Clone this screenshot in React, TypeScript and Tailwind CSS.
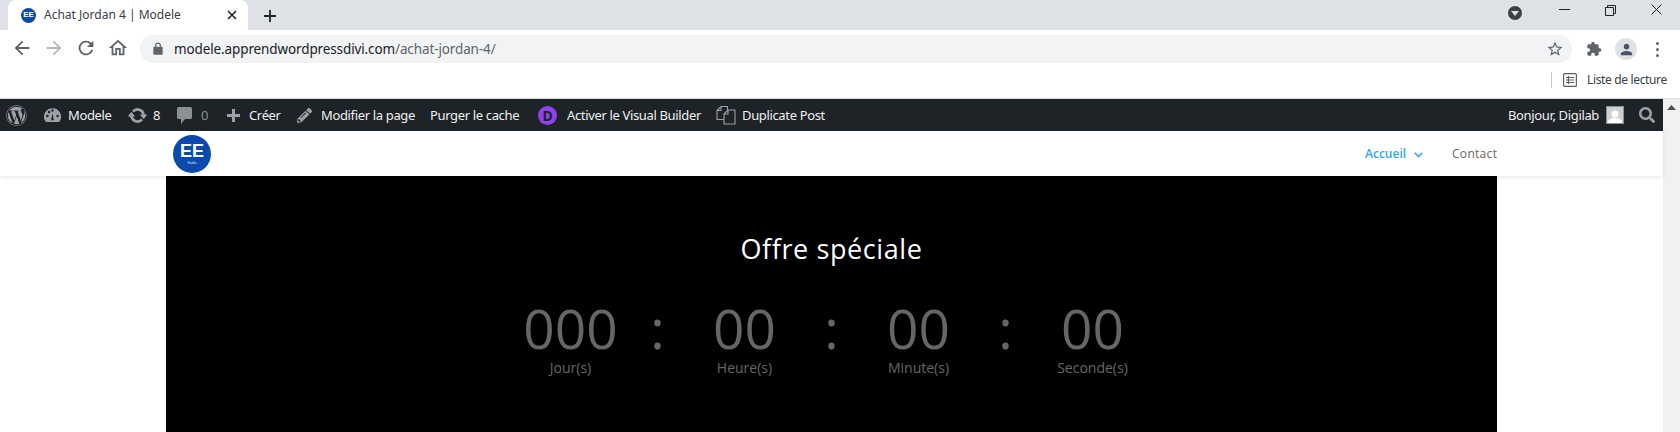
import React from "react";
import { FaWordpress, FaPencilAlt, FaSearch } from "react-icons/fa";

const Mi = ({ d, size = 20, color = "#5f6368", className = "" }: { d: string; size?: number; color?: string; className?: string }) => (
  <svg width={size} height={size} viewBox="0 0 24 24" fill={color} className={className}><path d={d} /></svg>
);

const Logo = ({ size, big, small }: { size: number; big: number; small?: boolean }) => (
  <div className="rounded-full bg-[#0a4aad] flex flex-col items-center justify-center shrink-0 text-white font-bold" style={{ width: size, height: size }}>
    <span className="font-['Liberation_Sans',sans-serif] leading-none" style={{ fontSize: big }}>EE</span>
    {small && <span className="text-[3px] leading-[4px] font-normal mt-[1px]">Studio</span>}
  </div>
);

const A = ({ ml, w, children, muted }: { ml: number; w?: number; children: React.ReactNode; muted?: boolean }) => (
  <span className={`shrink-0 whitespace-nowrap mt-[2px] ${muted ? "text-[#8c8f94]" : "text-[#f0f0f1]"}`} style={{ marginLeft: ml, width: w }}>{children}</span>
);

const Unit = ({ value, label }: { value: string; label: string }) => (
  <div className="w-[87px] flex flex-col items-center">
    <div className="text-[55px] leading-[56px] text-[#666666] whitespace-nowrap">{value}</div>
    <div className="text-[14px] leading-[20px] mt-[2px] text-[#666666] whitespace-nowrap">{label}</div>
  </div>
);
const Sep = () => (
  <div className="w-[87px] flex justify-center text-[55px] leading-[56px] text-[#666666]">:</div>
);

export default function App() {
  return (
    <div className="w-[1680px] h-[432px] overflow-hidden flex flex-col bg-white font-['Noto_Sans',sans-serif]">
      {/* tab strip */}
      <div className="h-[30px] bg-[#dee1e6] flex items-end shrink-0">
        <div className="ml-[8px] w-[240px] h-[30px] bg-white rounded-t-[8px] flex items-center">
          <div className="ml-[13px]"><Logo size={15} big={8} /></div>
          <span className="ml-[8px] w-[183px] text-[12px] text-[#3c4043] whitespace-nowrap">Achat Jordan 4 | Modele</span>
          <svg width="10" height="10" viewBox="0 0 10 10" stroke="#202124" strokeWidth="1.6"><path d="M1 1l8 8M9 1l-8 8" /></svg>
        </div>
        <svg className="ml-[16px] mb-[8px]" width="12" height="12" viewBox="0 0 12 12" stroke="#202124" strokeWidth="1.8"><path d="M6 0v12M0 6h12" /></svg>
        <div className="flex-1" />
        <div className="self-start mt-[6px] w-[14px] h-[14px] rounded-full bg-[#3c4043] flex items-center justify-center">
          <svg width="8" height="5" viewBox="0 0 8 5" fill="#dee1e6"><path d="M0 0h8L4 5z" /></svg>
        </div>
        <svg className="self-start mt-[9px] ml-[37px]" width="11" height="2" viewBox="0 0 11 2" fill="#202124"><path d="M0 0h11v1H0z" /></svg>
        <svg className="self-start mt-[5px] ml-[35px]" width="11" height="11" viewBox="0 0 11 11" fill="none" stroke="#202124"><path d="M.5 2.5h8v8h-8zM2.5 2.5v-2h8v8h-2" /></svg>
        <svg className="self-start mt-[4px] ml-[35px] mr-[18px]" width="11" height="11" viewBox="0 0 11 11" stroke="#202124"><path d="M.5.5l10 10M10.5.5l-10 10" /></svg>
      </div>

      {/* toolbar */}
      <div className="h-[34px] flex items-center shrink-0 bg-white">
        <div className="w-[140px] flex items-center pl-[11px] gap-[10px] mt-[2px]">
          <Mi size={22} d="M20 11H7.83l5.59-5.59L12 4l-8 8 8 8 1.41-1.41L7.83 13H20v-2z" />
          <Mi size={22} color="#b4b7bb" d="M12 4l-1.41 1.41L16.17 11H4v2h12.17l-5.58 5.59L12 20l8-8z" />
          <Mi size={22} d="M17.65 6.35A7.958 7.958 0 0 0 12 4c-4.42 0-7.99 3.58-7.99 8s3.57 8 7.99 8c3.73 0 6.84-2.55 7.73-6h-2.08A5.99 5.99 0 0 1 12 18c-3.31 0-6-2.69-6-6s2.69-6 6-6c1.66 0 3.14.69 4.22 1.78L13 11h7V4l-2.35 2.35z" />
          <Mi size={22} d="M12 5.69l5 4.5V18h-2v-6H9v6H7v-7.81l5-4.5M12 3 2 12h3v8h6v-6h2v6h6v-8h3L12 3z" />
        </div>
        <div className="w-[1432px] h-[28px] rounded-full bg-[#f1f3f4] flex items-center mt-[4px]">
          <Mi className="ml-[11px]" size={14} d="M18 8h-1V6c0-2.76-2.24-5-5-5S7 3.24 7 6v2H6c-1.1 0-2 .9-2 2v10c0 1.1.9 2 2 2h12c1.1 0 2-.9 2-2V10c0-1.1-.9-2-2-2zM9 8V6c0-1.66 1.34-3 3-3s3 1.34 3 3v2H9z" />
          <span className="ml-[9px] text-[13.5px] text-[#202124] whitespace-nowrap tracking-[-0.12px]">modele.apprendwordpressdivi.com<span className="text-[#5f6368]">/achat-jordan-4/</span></span>
          <div className="flex-1" />
          <Mi className="mr-[8px]" size={18} d="M22 9.24l-7.19-.62L12 2 9.19 8.63 2 9.24l5.46 4.73L5.82 21 12 17.27 18.18 21l-1.63-7.03L22 9.24zM12 15.4l-3.76 2.27 1-4.28-3.32-2.88 4.38-.38L12 6.1l1.71 4.04 4.38.38-3.32 2.88 1 4.28L12 15.4z" />
        </div>
        <Mi className="ml-[14px] mt-[4px]" size={16} color="#5f6368" d="M20.5 11H19V7c0-1.1-.9-2-2-2h-4V3.5C13 2.12 11.88 1 10.5 1S8 2.12 8 3.5V5H4c-1.1 0-1.99.9-1.99 2v3.8H3.5c1.49 0 2.7 1.21 2.7 2.7s-1.21 2.7-2.7 2.7H2V20c0 1.1.9 2 2 2h3.8v-1.5c0-1.49 1.21-2.7 2.7-2.7 1.49 0 2.7 1.21 2.7 2.7V22H17c1.1 0 2-.9 2-2v-4h1.5c1.38 0 2.5-1.12 2.5-2.5S21.88 11 20.5 11z" />
        <div className="ml-[13px] mt-[4px] w-[22px] h-[22px] rounded-full bg-[#dee1e6] flex items-center justify-center">
          <Mi size={17} color="#4a5568" d="M12 12c2.21 0 4-1.79 4-4s-1.79-4-4-4-4 1.79-4 4 1.79 4 4 4zm0 2c-2.67 0-8 1.34-8 4v2h16v-2c0-2.66-5.33-4-8-4z" />
        </div>
        <div className="ml-[19px] mt-[4px] flex flex-col gap-[3px]">
          <span className="w-[3px] h-[3px] rounded-full bg-[#5f6368]" />
          <span className="w-[3px] h-[3px] rounded-full bg-[#5f6368]" />
          <span className="w-[3px] h-[3px] rounded-full bg-[#5f6368]" />
        </div>
      </div>

      {/* bookmarks */}
      <div className="h-[35px] flex items-center justify-end shrink-0 border-b border-[#dadce0] pb-[3px]">
        <div className="w-px h-[16px] bg-[#c4c7cb] mr-[11px]" />
        <svg width="14" height="14" viewBox="0 0 14 14" fill="none" stroke="#5f6368" strokeWidth="1.2"><rect x=".6" y=".6" width="12.8" height="12.8" rx="1" /><path d="M3 4.5h8M3 7h8M3 9.500h8M5.500 3v8" /></svg>
        <span className="ml-[10px] mr-[14px] text-[12px] leading-[16px] text-[#3c4043] whitespace-nowrap w-[79px] tracking-[-0.35px]">Liste de lecture</span>
      </div>

      {/* page + scrollbar */}
      <div className="flex-1 flex min-h-0">
        <div className="w-[1663px] flex flex-col">
          <div className="h-[32px] bg-[#1d2327] flex items-center text-[13px] shrink-0 font-['Noto_Sans',sans-serif] tracking-[-0.35px]">
            <FaWordpress className="ml-[6px] shrink-0" size={21} color="#9ca2a7" />
            <svg className="ml-[17px] shrink-0" width="17" height="15" viewBox="0 0 20 17" fill="#9ca2a7"><path d="M10 0a10 10 0 0 0-8.600 15.100c.3.5.8.9 1.400.9h14.400c.6 0 1.100-.4 1.400-.9A10 10 0 0 0 10 0zm-6 10.500a1.500 1.500 0 1 1 0-3 1.500 1.500 0 0 1 0 3zM6 6a1.500 1.500 0 1 1 0-3 1.500 1.500 0 0 1 0 3zm4-2a1.500 1.500 0 1 1 0-3 1.500 1.500 0 0 1 0 3zm1.600 10H8.400L10 6l1.600 8zM16 10.500a1.500 1.500 0 1 1 0-3 1.500 1.500 0 0 1 0 3z" /></svg>
            <A ml={7} w={43}>Modele</A>
            <svg className="ml-[17px] shrink-0" width="19" height="17" viewBox="0 0 20 18" fill="none" stroke="#9ca2a7" strokeWidth="2.8">
              <path d="M5.200 4.800A6.500 6.500 0 0 1 16.500 8.500" />
              <path d="M14.800 13.200A6.500 6.500 0 0 1 3.500 9.500" />
              <path d="M12.500 8h8l-4 5zM7.500 10h-8l4-5z" fill="#9ca2a7" stroke="none" />
            </svg>
            <A ml={6} w={7}>8</A>
            <svg className="ml-[17px] shrink-0" width="15" height="17" viewBox="0 0 15 17" fill="#8c8f94"><path d="M1.500 0h12A1.500 1.500 0 0 1 15 1.500v9a1.500 1.500 0 0 1-1.500 1.500H8l-4 5v-5H1.500A1.500 1.500 0 0 1 0 10.500v-9A1.500 1.500 0 0 1 1.500 0z" /></svg>
            <A ml={9} w={7} muted>0</A>
            <svg className="ml-[19px] shrink-0" width="13" height="13" viewBox="0 0 13 13" fill="#9ca2a7"><path d="M5 0h3v5h5v3H8v5H5V8H0V5h5z" /></svg>
            <A ml={9} w={30}>Créer</A>
            <FaPencilAlt className="ml-[18px] shrink-0" size={15} color="#9ca2a7" />
            <A ml={9} w={93}>Modifier la page</A>
            <A ml={16} w={87}>Purger le cache</A>
            <div className="ml-[21px] w-[19px] h-[19px] rounded-full bg-[#8f42ec] flex items-center justify-center text-[#1d2327] text-[14px] font-bold shrink-0">D</div>
            <A ml={10} w={134}>Activer le Visual Builder</A>
            <svg className="ml-[15px] shrink-0" width="20" height="20" viewBox="0 0 20 20" fill="none" stroke="#9ca2a7" strokeWidth="1.100">
              <path d="M7.500 14.500H1V5.500L5 1.500h6.500V5" />
              <path d="M1 5.500h4v-4" />
              <path d="M12 5h7v14H8V9z" />
              <path d="M8 9h4V5" />
            </svg>
            <A ml={6} w={82}>Duplicate Post</A>
            <div className="flex-1" />
            <A ml={0} w={92}>Bonjour, Digilab</A>
            <div className="ml-[6px] w-[18px] h-[18px] bg-[#cfcfcf] border border-[#8c8f94] flex items-end justify-center overflow-hidden shrink-0">
              <svg width="14" height="14" viewBox="0 0 14 14" fill="#fff"><circle cx="7" cy="5" r="3.500" /><path d="M0 14c0-4 3-5 7-5s7 1 7 5z" /></svg>
            </div>
            <FaSearch className="ml-[15px] mr-[8px] shrink-0" size={16} color="#9ca2a7" />
          </div>

          <div className="h-[45px] shrink-0 bg-white flex items-center shadow-[0_1px_5px_rgba(0,0,0,0.1)] relative font-['Open_Sans',sans-serif] text-[12px] pl-[173px]">
            <Logo size={38} big={18} small />
            <div className="flex-1" />
            <span className="text-[#2ea3f2] font-semibold text-[12px] w-[41px] whitespace-nowrap">Accueil</span>
            <svg className="ml-[8px] mt-[2px]" width="9" height="6" viewBox="0 0 9 6" fill="none" stroke="#2ea3f2" strokeWidth="1.600"><path d="M.8.8l3.700 3.700L8.200.8" /></svg>
            <span className="ml-[29px] mr-[166px] text-[#666666] whitespace-nowrap w-[45px] tracking-[0.3px]">Contact</span>
          </div>

          <div className="flex-1 ml-[166px] w-[1331px] bg-black flex flex-col items-center font-['Open_Sans',sans-serif] min-h-0 overflow-hidden">
            <div className="mt-[55px] text-[27px] leading-[36px] text-white tracking-[0.6px]">Offre spéciale</div>
            <div className="mt-[33px] flex">
              <Unit value="000" label="Jour(s)" />
              <Sep />
              <Unit value="00" label="Heure(s)" />
              <Sep />
              <Unit value="00" label="Minute(s)" />
              <Sep />
              <Unit value="00" label="Seconde(s)" />
            </div>
          </div>
        </div>
        <div className="w-[17px] bg-[#f1f1f1] flex justify-center pt-[6px]">
          <svg width="9" height="5" viewBox="0 0 9 5" fill="#505050"><path d="M4.500 0L9 5H0z" /></svg>
        </div>
      </div>
    </div>
  );
}
